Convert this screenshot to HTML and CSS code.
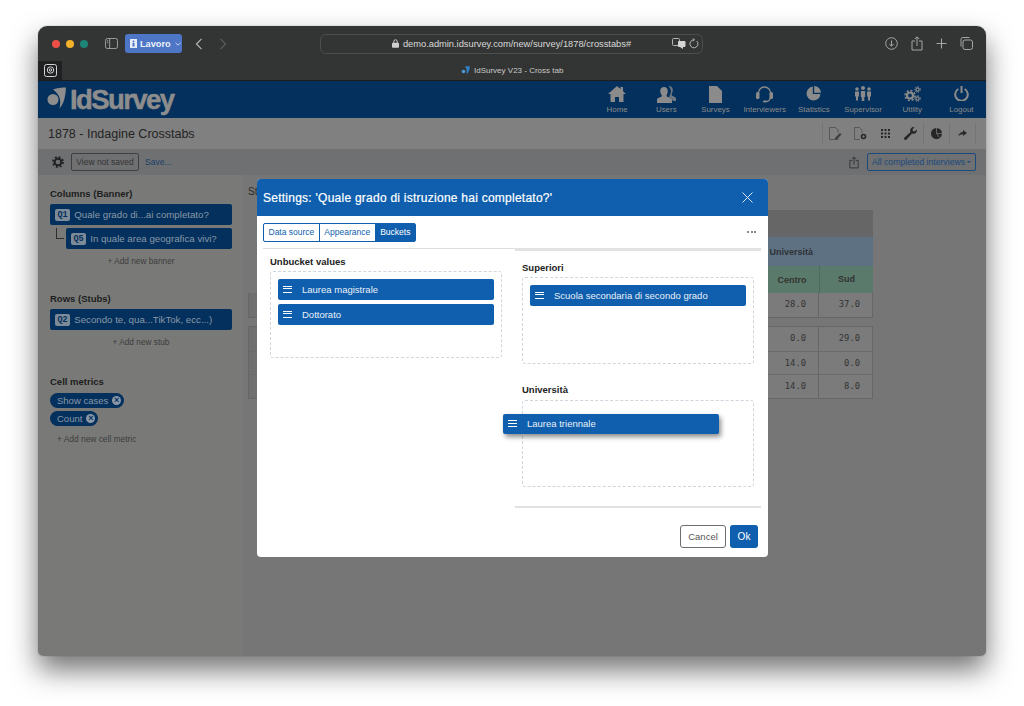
FILE: index.html
```html
<!DOCTYPE html>
<html>
  <head>
    <meta charset="utf-8" />
    <title>IdSurvey V23 - Cross tab</title>
    <link rel="stylesheet" href="styles.css">
  </head>
  <body>
    <div class="window">
      <div class="browser-bar">
        <div class="lights"><i class="red"></i><i class="yellow"></i><i class="teal"></i></div>
        <svg class="side-icon" width="13" height="11" viewBox="0 0 14 12" fill="none" stroke="#a5a5a5"><rect x=".5" y=".5" width="13" height="11" rx="2"/><path d="M5 .5v11M2 3h1.500M2 5h1.500"/></svg>
        <div class="profile">
          <svg width="7" height="9" viewBox="0 0 7 9"><path fill="#e8edf7" d="M0 0h7v9H0z"/><circle cx="3.500" cy="2.500" r="1" fill="#4d76c6"/><path fill="#4d76c6" d="M2.500 4h2v3.500h-2z"/></svg>
          <span>Lavoro</span>
          <svg width="6" height="4" viewBox="0 0 6 4" fill="none" stroke="#c9d6ef"><path d="M.5 .8 3 3.200 5.500 .8"/></svg>
        </div>
        <svg class="nav-back" width="8" height="12" viewBox="0 0 8 12" fill="none" stroke="#b5b5b5" stroke-width="1.200"><path d="M6.500 .8 1.500 6l5 5.200"/></svg>
        <svg class="nav-fwd" width="8" height="12" viewBox="0 0 8 12" fill="none" stroke="#5d5d5d" stroke-width="1.200"><path d="M1.500 .8l5 5.200-5 5.200"/></svg>
        <div class="url">
          <svg width="7" height="9" viewBox="0 0 7 9"><path fill="none" stroke="#cfcfcf" d="M1.800 4V2.500a1.700 1.700 0 0 1 3.400 0V4"/><rect y="3.800" width="7" height="5" rx="1" fill="#cfcfcf"/></svg>
          <span>demo.admin.idsurvey.com/new/survey/1878/crosstabs#</span>
          <div class="url-tools">
            <svg width="14" height="11" viewBox="0 0 14 11"><rect x=".5" y=".5" width="7" height="7" rx="1" fill="none" stroke="#b5b5b5"/><rect x="6" y="3" width="7.500" height="6" rx="1" fill="#d5d5d5"/><path fill="#d5d5d5" d="M8 9h3v2z"/></svg>
            <svg width="10" height="11" viewBox="0 0 10 11" fill="none" stroke="#b5b5b5"><path d="M7.800 3a4 4 0 1 1-2.800-1.200"/><path d="M4 .3 5.500 1.800 4 3.300"/></svg>
          </div>
        </div>
        <div class="browser-tools">
          <svg width="13" height="13" viewBox="0 0 13 13" fill="none" stroke="#a5a5a5"><circle cx="6.500" cy="6.500" r="5.800"/><path d="M6.500 3.500v5.500M4.300 7l2.200 2.200L8.700 7"/></svg>
          <svg width="12" height="15" viewBox="0 0 12 15" fill="none" stroke="#a5a5a5"><path d="M4 5H1v9h10V5H8M6 10V1M3.800 3 6 .8 8.200 3"/></svg>
          <svg width="11" height="11" viewBox="0 0 11 11" fill="none" stroke="#a5a5a5" stroke-width="1.100"><path d="M5.500 .5v10M.5 5.500h10"/></svg>
          <svg width="13" height="13" viewBox="0 0 13 13" fill="none" stroke="#a5a5a5"><rect x="3" y="3" width="9.500" height="9.500" rx="2"/><path d="M1 9.500V2.500A2 2 0 0 1 3 .5h6.500"/></svg>
        </div>
      </div>
      <div class="tab-bar">
        <div class="pinned">
          <svg width="13" height="13" viewBox="0 0 13 13" fill="none" stroke="#d5d5d5"><rect x=".5" y=".5" width="12" height="12" rx="2"/><circle cx="6.500" cy="6" r="3.200"/><circle cx="6.500" cy="6" r="1.200"/></svg>
        </div>
        <div class="tab-title">
          <svg width="9" height="9" viewBox="0 0 9 9"><circle cx="2.500" cy="5.500" r="1.800" fill="#4b9ad8"/><path fill="#2f7fc4" d="M4 .5C6 0 8 .5 9 .5 8.500 4 7.500 7 5.500 8.500 6 6 6 3 4 .5z"/></svg>
          <span>IdSurvey V23 - Cross tab</span>
        </div>
      </div>

      <header class="topnav">
        <div class="logo">
          <svg width="20" height="22" viewBox="0 0 20 22"><circle cx="6" cy="12.500" r="5.500" fill="#8d8d8d"/><path fill="#8d8d8d" d="M6 2.500C10 1 15 .5 19 .5 18.500 8 17.500 16 12.500 21.500 14 15 14 8 6 2.500z"/></svg>
          <span>IdSurvey</span>
        </div>
        <nav class="menu">
          <a class="menu-item"><svg width="18" height="16" viewBox="0 0 18 16"><path d="M9 0 0 8h2.500v8h4.500v-5h4v5h4.500V8H18l-3-2.700V1h-2.500v2z"/></svg>Home</a>
          <a class="menu-item"><svg width="19" height="17" viewBox="0 0 19 17"><path d="M7 1c2.500 0 3.800 2 3.800 4.200S9.500 9 9.500 10c0 1 5 1.500 5.500 3.500V17H0v-3.500C.5 11.500 5 11 5 10S3.200 7.500 3.200 5.200 4.500 1 7 1z"/><path d="M12 0c2.500 0 3.800 2 3.800 4 0 2-1 3.500-1.200 5 .2 1 3.400 1.500 4.400 3.200V15h-3c-.5-2-2-3-3.800-3.800-.4-1 1.800-3.500 1.800-6C13.500 3 12.800 1.500 11.500.1z" opacity=".8"/></svg>Users</a>
          <a class="menu-item"><svg width="13" height="17" viewBox="0 0 13 17"><path d="M0 0h8l5 5v12H0z"/></svg>Surveys</a>
          <a class="menu-item"><svg width="17" height="18" viewBox="0 0 17 18"><path fill="none" stroke="#8b8b8b" stroke-width="1.300" d="M2.500 9V7a6 6 0 0 1 12 0v2M14 12c0 2.500-2 3.500-4.500 3.500"/><rect y="6" width="3.500" height="7" rx="1.500"/><rect x="13.500" y="6" width="3.500" height="7" rx="1.500"/><rect x="7" y="14.500" width="3.500" height="2" rx="1"/></svg>Interviewers</a>
          <a class="menu-item"><svg width="15" height="15" viewBox="0 0 15 15"><path d="M6.800 .5v7.500h7.700A7 7 0 1 1 6.800.5z"/><path d="M8.200 0A7 7 0 0 1 15 6.800H8.200z"/></svg>Statistics</a>
          <a class="menu-item"><svg width="18" height="15" viewBox="0 0 18 15"><circle cx="3" cy="3" r="1.800"/><circle cx="9" cy="2" r="2"/><circle cx="15" cy="3" r="1.800"/><path d="M1 5.500h4v5H4v4H2v-4H1zM6.800 5h4.400v6H10.300v4H7.700v-4h-.9zM13 5.500h4v5h-1v4h-2v-4h-1z"/></svg>Supervisor</a>
          <a class="menu-item"><svg width="17" height="16" viewBox="0 0 17 16"><g fill="none" stroke="#8b8b8b"><circle cx="6" cy="9.500" r="3" stroke-width="2.200"/><circle cx="6" cy="9.500" r="5" stroke-width="1.500" stroke-dasharray="2 1.900"/><circle cx="13.500" cy="3.500" r="1.600" stroke-width="1.200"/><circle cx="13.500" cy="3.500" r="2.800" stroke-width="1" stroke-dasharray="1.300 1.300"/><circle cx="13.500" cy="12.500" r="1.600" stroke-width="1.200"/><circle cx="13.500" cy="12.500" r="2.800" stroke-width="1" stroke-dasharray="1.300 1.300"/></g></svg>Utility</a>
          <a class="menu-item"><svg width="15" height="15" viewBox="0 0 15 15"><g fill="none" stroke="#8b8b8b" stroke-width="2"><path d="M4.300 3a6.300 6.300 0 1 0 6.400 0"/><path d="M7.500 0v7"/></g></svg>Logout</a>
        </nav>
      </header>

      <div class="title-row">
        <h1>1878 - Indagine Crosstabs</h1>
        <div class="title-tools">
          <div class="tool-group">
            <span class="tool"><svg width="13" height="13" viewBox="0 0 13 13"><path fill="none" stroke="#4e4e4e" stroke-width=".8" d="M9 10v2.500H.5V.5h6L9 3v3"/><path fill="#3c3c3c" d="m6 11 5-5 1.500 1.500-5 5H6z"/></svg></span>
            <span class="tool"><svg width="13" height="13" viewBox="0 0 13 13"><path fill="none" stroke="#4e4e4e" stroke-width=".8" d="M6 12.500H.5V.5h5L8 3v3"/><circle cx="9.500" cy="9.500" r="2" fill="none" stroke="#262626" stroke-width="1.600"/></svg></span>
            <span class="tool"><svg width="9" height="9" viewBox="0 0 9 9"><path fill="#262626" d="M0 0h2v2H0zM3.500 0h2v2h-2zM7 0h2v2H7zM0 3.500h2v2H0zM3.500 3.500h2v2h-2zM7 3.500h2v2H7zM0 7h2v2H0zM3.500 7h2v2h-2zM7 7h2v2H7z"/></svg></span>
            <span class="tool"><svg width="13" height="13" viewBox="0 0 13 13"><path fill="#262626" d="M12.800 2.500A3.500 3.500 0 0 1 8 6.500L2.500 12.500a1.300 1.300 0 0 1-2-2L6.500 5A3.500 3.500 0 0 1 10.500.2L8.500 2.300l.4 1.800 1.800.4z"/></svg></span>
          </div>
          <div class="tool-group">
            <span class="tool"><svg width="11" height="11" viewBox="0 0 11 11"><circle cx="5.500" cy="5.500" r="5.500" fill="#262626"/><path stroke="#808080" stroke-width=".7" d="M5.500 5.500V0M5.500 5.500H11M5.500 5.500l3 4"/></svg></span>
          </div>
          <div class="tool-group">
            <span class="tool"><svg width="9" height="7" viewBox="0 0 9 7"><path fill="#2a2a2a" d="M5 0l4 3-4 3V4.300C3 4.300 1.500 5 .3 6.500.8 3.800 2.500 2 5 1.800z"/></svg></span>
          </div>
        </div>
      </div>

      <div class="view-row">
        <svg class="gear" width="12" height="12" viewBox="0 0 12 12"><circle cx="6" cy="6" r="3.300" fill="none" stroke="#222" stroke-width="2"/><circle cx="6" cy="6" r="5" fill="none" stroke="#222" stroke-width="1.800" stroke-dasharray="2 1.930"/></svg>
        <span class="view-btn">View not saved</span>
        <a class="save-link">Save...</a>
        <svg class="view-share" width="10" height="13" viewBox="0 0 12 15" fill="none" stroke="#2c2c2c"><path d="M4 5H1v9h10V5H8M6 10V1M3.800 3 6 .8 8.200 3"/></svg>
        <span class="filter-btn">All completed interviews <i class="caret"></i></span>
      </div>

      <div class="workspace">
        <aside class="sidebar">
          <section class="side-block block-columns">
            <h3>Columns (Banner)</h3>
            <div class="var-chip"><b>Q1</b>Quale grado di...ai completato?</div>
            <div class="nested-row">
              <span class="elbow"></span>
              <div class="var-chip"><b>Q5</b>In quale area geografica vivi?</div>
            </div>
            <a class="add-link">+ Add new banner</a>
          </section>
          <section class="side-block block-rows">
            <h3>Rows (Stubs)</h3>
            <div class="var-chip"><b>Q2</b>Secondo te, qua...TikTok, ecc...)</div>
            <a class="add-link">+ Add new stub</a>
          </section>
          <section class="side-block block-metrics">
            <h3>Cell metrics</h3>
            <div class="pill">Show cases <i class="pill-x">×</i></div>
            <div class="pill">Count <i class="pill-x">×</i></div>
            <a class="add-link add-left">+ Add new cell metric</a>
          </section>
        </aside>

        <main class="content">
          <div class="content-label">St</div>
          <div class="table-head">
            <div class="head-grey"></div>
            <div class="head-blue">Università</div>
            <div class="head-green"><span>Centro</span><span>Sud</span></div>
          </div>
          <div class="table-body">
            <div class="t-row"><span class="t-stub"></span><span class="t-num">28.0</span><span class="t-num">37.0</span></div>
          </div>
          <div class="table-body second">
            <div class="t-row"><span class="t-stub"></span><span class="t-num">0.0</span><span class="t-num">29.0</span></div>
            <div class="t-row"><span class="t-stub"></span><span class="t-num">14.0</span><span class="t-num">0.0</span></div>
            <div class="t-row"><span class="t-stub"></span><span class="t-num">14.0</span><span class="t-num">8.0</span></div>
          </div>
        </main>
      </div>

      <div class="modal">
        <div class="modal-head">
          <h2>Settings: 'Quale grado di istruzione hai completato?'</h2>
          <svg width="11" height="11" viewBox="0 0 11 11" stroke="#dbe7f4"><path d="M.5 .5l10 10M10.500 .5l-10 10"/></svg>
        </div>
        <div class="modal-tabs">
          <div class="btn-group">
            <span class="seg">Data source</span><span class="seg">Appearance</span><span class="seg active">Buckets</span>
          </div>
          <span class="dots"><i></i><i></i><i></i></span>
        </div>
        <div class="modal-cols">
          <div class="col-left">
            <h4>Unbucket values</h4>
            <div class="dropzone">
              <div class="bucket-item"><span class="burger"></span>Laurea magistrale</div>
              <div class="bucket-item"><span class="burger"></span>Dottorato</div>
            </div>
          </div>
          <div class="col-right">
            <h4>Superiori</h4>
            <div class="dropzone">
              <div class="bucket-item"><span class="burger"></span>Scuola secondaria di secondo grado</div>
            </div>
            <h4 class="second-title">Università</h4>
            <div class="dropzone"></div>
          </div>
        </div>
        <div class="modal-foot">
          <span class="btn-cancel">Cancel</span>
          <span class="btn-ok">Ok</span>
        </div>
        <div class="bucket-item dragged"><span class="burger"></span>Laurea triennale</div>
      </div>
    </div>
  </body>
</html>
```

FILE: styles.css
```css
* {
  box-sizing: border-box;
}
html,
body {
  margin: 0;
  height: 706px;
  overflow: hidden;
  background: #fff;
}
body {
  padding: 26px 38px 0;
  font-family: "Liberation Sans", Arial, sans-serif;
}
h1,
h2,
h3,
h4 {
  margin: 0;
}
.window {
  position: relative;
  width: 948px;
  height: 630px;
  display: flex;
  flex-direction: column;
  border-radius: 9px 9px 5px 5px;
  overflow: hidden;
  box-shadow: 0 0 1px rgba(0, 0, 0, 0.5), 0 14px 28px rgba(0, 0, 0, 0.55);
}

/* browser chrome */
.browser-bar {
  height: 35px;
  background: #333534;
  display: flex;
  align-items: center;
  padding: 0 13px 0 14px;
  position: relative;
}
.lights {
  display: flex;
  gap: 6px;
}
.lights i {
  width: 8px;
  height: 8px;
  border-radius: 50%;
}
.red {
  background: #ee5048;
}
.yellow {
  background: #f4b22a;
}
.teal {
  background: #1f8478;
}
.side-icon {
  margin-left: 17px;
}
.profile {
  margin-left: 7px;
  width: 57px;
  height: 19px;
  background: #4d76c6;
  border-radius: 3px;
  color: #eef2fa;
  font-size: 9.200px;
  font-weight: bold;
  display: flex;
  align-items: center;
  gap: 3px;
  padding-left: 5px;
}
.profile svg:last-child {
  margin-left: 1px;
}
.nav-back {
  margin-left: 13px;
}
.nav-fwd {
  margin-left: 16px;
}
.url {
  margin-left: 93px;
  width: 383px;
  height: 20px;
  border: 1px solid #4c4e4d;
  border-radius: 6px;
  color: #d9d9d9;
  font-size: 9.300px;
  display: flex;
  align-items: center;
  justify-content: center;
  gap: 4px;
  position: relative;
}
.url-tools {
  position: absolute;
  right: 3px;
  top: 3px;
  display: flex;
  gap: 3px;
  align-items: center;
}
.browser-tools {
  margin-left: auto;
  display: flex;
  align-items: center;
  gap: 13px;
}

.tab-bar {
  height: 20px;
  background: #333534;
  border-bottom: 1px solid #1d1d1d;
  display: flex;
  position: relative;
}
.pinned {
  width: 24px;
  height: 19px;
  background: #1f2122;
  display: flex;
  align-items: center;
  justify-content: center;
}
.tab-title {
  margin-left: 399px;
  display: flex;
  align-items: center;
  gap: 4px;
  color: #c9c9c9;
  font-size: 8px;
}

/* app header */
.topnav {
  height: 37px;
  background: #03305c;
  display: flex;
  justify-content: space-between;
}
.logo {
  display: flex;
  align-items: center;
  padding-left: 9px;
  color: #8d8d8d;
  font-weight: bold;
  font-size: 27.500px;
  letter-spacing: -1.600px;
  line-height: 1;
}
.logo svg {
  margin: -4px 3px 0 0;
}
.logo span {
  -webkit-text-stroke: 0.5px #8d8d8d;
}
.menu {
  display: flex;
}
.menu-item {
  width: 49.200px;
  height: 37px;
  color: #8b8b8b;
  font-size: 7.900px;
  display: flex;
  flex-direction: column;
  align-items: center;
  justify-content: flex-end;
  padding-bottom: 4px;
  position: relative;
}
.menu-item svg {
  position: absolute;
  top: 5px;
  fill: #8b8b8b;
}

.title-row {
  height: 31px;
  background: #808080;
  display: flex;
  align-items: center;
  justify-content: space-between;
  padding: 0 10px;
  color: #232323;
}
.title-row h1 {
  font-size: 12.500px;
  font-weight: normal;
}
.title-tools {
  display: flex;
}
.tool-group {
  display: flex;
  height: 21px;
  border-left: 1px solid #757575;
}
.tool-group:last-child {
  border-right: 1px solid #757575;
}
.tool {
  width: 25px;
  display: flex;
  align-items: center;
  justify-content: center;
}
.view-row {
  height: 26px;
  background: #6f7072;
  display: flex;
  align-items: center;
  padding: 0 10px 0 14px;
  font-size: 8.500px;
}
.view-btn {
  margin-left: 7px;
  height: 18px;
  width: 68px;
  border: 1px solid #3f3f3f;
  border-radius: 2px;
  color: #333;
  display: flex;
  align-items: center;
  justify-content: center;
}
.save-link {
  margin-left: 6px;
  color: #1a3e68;
}
.view-share {
  margin-left: auto;
}
.filter-btn {
  margin-left: 8px;
  width: 109px;
  height: 18px;
  border: 1px solid #1b4a7c;
  border-radius: 2px;
  color: #1b4a7c;
  font-size: 8.700px;
  display: flex;
  align-items: center;
  justify-content: center;
  gap: 2px;
}
.caret {
  border-top: 2.500px solid #1b4a7c;
  border-left: 2.500px solid transparent;
  border-right: 2.500px solid transparent;
}

/* workspace under the dialog */
.workspace {
  flex: 1;
  display: flex;
  min-height: 0;
}
.sidebar {
  width: 205px;
  background: #797a78;
  padding: 13px 11px 0 12px;
}
.side-block h3 {
  font-size: 9.500px;
  color: #1d1d1d;
  line-height: 11px;
}
.block-rows {
  margin-top: 27px;
}
.block-metrics {
  margin-top: 29px;
}
.var-chip {
  margin-top: 5px;
  height: 21px;
  background: #03305c;
  border-radius: 2px;
  color: #8a98a8;
  font-size: 9.700px;
  display: flex;
  align-items: center;
  padding-left: 5px;
  white-space: nowrap;
}
.var-chip b {
  background: #7d8a98;
  color: #03305c;
  border-radius: 2px;
  font: bold 8.500px "Liberation Mono", monospace;
  padding: 1px 2.500px;
  margin-right: 4px;
}
.nested-row {
  display: flex;
  margin-top: 3px;
}
.nested-row .var-chip {
  margin-top: 0;
  flex: 1;
}
.elbow {
  width: 8px;
  height: 11px;
  margin: 0 2px 0 6px;
  border-left: 1px solid #2e2e2e;
  border-bottom: 1px solid #2e2e2e;
}
.add-link {
  display: block;
  margin-top: 7px;
  text-align: center;
  font-size: 8.300px;
  line-height: 10px;
  color: #3c3c3c;
}
.add-left {
  text-align: left;
  margin: 8px 0 0 7px;
  font-size: 8.400px;
}
.pill {
  margin-top: 3.500px;
  width: fit-content;
  height: 15px;
  background: #03305c;
  border-radius: 8px;
  color: #8a98a8;
  font-size: 9.500px;
  display: flex;
  align-items: center;
  gap: 4px;
  padding: 0 3px 0 7px;
}
.block-metrics h3 {
  margin-bottom: 5.500px;
}
.pill-x {
  width: 9px;
  height: 9px;
  border-radius: 50%;
  background: #8a98a8;
  color: #03305c;
  font: bold 9px/9px "Liberation Sans", sans-serif;
  text-align: center;
}
.content {
  flex: 1;
  background: #767676;
  padding: 11px 113px 0 5px;
}
.content-label {
  font-size: 10px;
  line-height: 12px;
  color: #2a2a2a;
  height: 13px;
}
.table-head {
  margin: 11px 0 0 300px;
  font-size: 9px;
  font-weight: bold;
  color: #333;
}
.head-grey {
  height: 27px;
  background: #666;
}
.head-blue {
  height: 29px;
  background: #5d7183;
  display: flex;
  align-items: center;
  justify-content: flex-end;
  padding-right: 60px;
  color: #2f3236;
}
.head-green {
  height: 27px;
  background: #5a7a6b;
  display: flex;
  justify-content: flex-end;
  align-items: center;
}
.head-green span {
  width: 54px;
  text-align: center;
}
.head-green span:last-child {
  border-left: 1px dotted #4a5a52;
  height: 27px;
  line-height: 27px;
}
.table-body {
  border: 1px solid #666;
  border-width: 0 1px 1px;
  background: #7b7b7b;
}
.table-body.second {
  margin-top: 8.500px;
  border-top-width: 1px;
}
.t-row {
  height: 23.500px;
  display: flex;
  border-top: 1px solid #6a6a6a;
}
.t-row:first-child {
  border-top: 0;
}
.t-stub {
  flex: 1;
  background: #6f6f6f;
}
.t-num {
  width: 54px;
  font: 8.800px/22px "DejaVu Sans Mono", monospace;
  color: #333;
  text-align: right;
  padding-right: 12px;
  border-left: 1px solid #666;
}

/* dialog */
.modal {
  position: absolute;
  left: 219px;
  top: 153px;
  width: 511px;
  height: 378px;
  background: #fff;
  border-radius: 4px;
  display: flex;
  flex-direction: column;
}
.modal-head {
  height: 37px;
  background: #0f5fae;
  border-radius: 4px 4px 0 0;
  color: #fff;
  display: flex;
  align-items: center;
  justify-content: space-between;
  padding: 0 15px 0 6px;
}
.modal-head h2 {
  font-size: 12px;
  font-weight: normal;
  letter-spacing: 0.25px;
  -webkit-text-stroke: 0.2px #fff;
}
.modal-tabs {
  height: 32px;
  margin: 0 7px 0 6px;
  display: flex;
  align-items: center;
  justify-content: space-between;
}
.btn-group {
  display: flex;
  height: 19px;
  border: 1px solid #0f5fae;
  border-radius: 2px;
  font-size: 8.500px;
  color: #0f5fae;
}
.seg {
  display: flex;
  align-items: center;
  padding: 0 4.500px;
  border-right: 1px solid #0f5fae;
}
.seg.active {
  background: #0f5fae;
  color: #fff;
  border-right: 0;
}
.dots {
  display: flex;
  gap: 1.500px;
  margin-right: 5px;
}
.dots i {
  width: 2px;
  height: 2px;
  border-radius: 50%;
  background: #666;
}
.modal-cols {
  display: flex;
  margin: 0 7px 0 6px;
  height: 260px;
}
.col-left {
  width: 252px;
  border-top: 1px solid #dedede;
  padding: 7px 13px 0 7px;
}
.col-right {
  width: 246px;
  border-top: 3px solid #e2e2e2;
  border-bottom: 2px solid #e2e2e2;
  padding: 11px 7px 0;
}
.modal-cols h4 {
  font-size: 9.500px;
  line-height: 12px;
  color: #222;
  margin-bottom: 3px;
}
.modal-cols h4.second-title {
  margin-top: 20px;
  margin-bottom: 4px;
}
.dropzone {
  height: 87px;
  border: 1px dashed #cfd6dd;
  border-radius: 3px;
  padding: 7px;
}
.bucket-item {
  height: 20.500px;
  margin-bottom: 4.500px;
  background: #0f5fae;
  border-radius: 2px;
  color: #e9f0f8;
  font-size: 9.500px;
  display: flex;
  align-items: center;
  gap: 10px;
  padding-left: 5px;
}
.burger {
  width: 9px;
  height: 7px;
  border-top: 1.500px solid #fff;
  border-bottom: 1.500px solid #fff;
  position: relative;
}
.burger::after {
  content: "";
  position: absolute;
  left: 0;
  right: 0;
  top: 1.500px;
  border-top: 1px solid #fff;
}
.dragged {
  position: absolute;
  left: 246px;
  top: 234.500px;
  width: 216px;
  height: 20px;
  margin: 0;
  box-shadow: 2px 3px 5px rgba(0, 0, 0, 0.45);
}
.modal-foot {
  display: flex;
  justify-content: flex-end;
  gap: 4px;
  padding: 17px 10px 0 0;
  font-size: 9.500px;
}
.btn-cancel {
  width: 46px;
  height: 23px;
  border: 1px solid #6d6d6d;
  border-radius: 3px;
  color: #555;
  display: flex;
  align-items: center;
  justify-content: center;
}
.btn-ok {
  width: 28px;
  height: 23px;
  background: #0f5fae;
  border-radius: 3px;
  color: #fff;
  font-size: 10px;
  display: flex;
  align-items: center;
  justify-content: center;
}
```
